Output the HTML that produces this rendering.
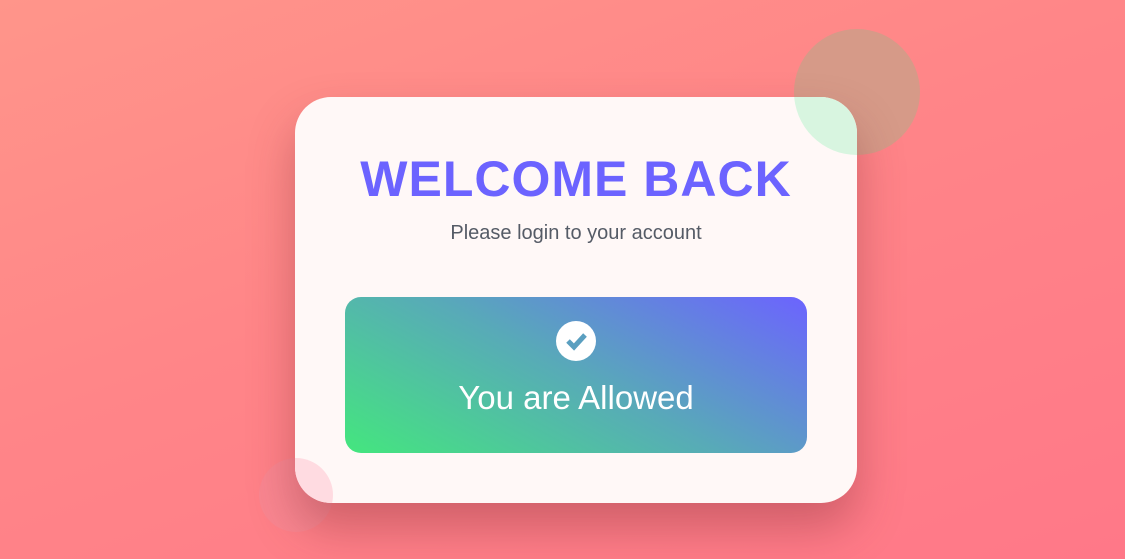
<!DOCTYPE html>
<html><head><style>
html,body{margin:0;width:1125px;height:559px;overflow:hidden}
body{background:linear-gradient(160deg,#ff958a 0%,#ff8588 45%,#ff7888 100%);font-family:"Liberation Sans",sans-serif;position:relative}
.card{position:absolute;left:295px;top:97px;width:562px;height:406px;border-radius:36px;background:#fff8f7;box-shadow:0 25px 45px rgba(120,40,50,.35);overflow:hidden}
.ctr{position:absolute;left:295px;width:562px;text-align:center;margin:0}
h1{top:150px;font-size:50px;font-weight:bold;color:#6c63ff;letter-spacing:1px}
p{top:222px;font-size:20px;color:#555b66}
.btn{position:absolute;left:345px;top:297px;width:462px;height:156px;border-radius:16px;background:linear-gradient(28deg,#44e67e 0%,#58aab8 50%,#6c63ff 100%)}
.c1{position:absolute;left:794px;top:29px;width:126px;height:126px;border-radius:50%;background:#d69a88}
.c2{position:absolute;left:259px;top:458px;width:74px;height:74px;border-radius:50%;background:#f98690}
</style></head><body>
<div class="c1"></div>
<div class="c2"></div>
<div class="card">
 <div style="position:absolute;left:499px;top:-68px;width:126px;height:126px;border-radius:50%;background:#d8f5e0"></div>
 <div style="position:absolute;left:-36px;top:361px;width:74px;height:74px;border-radius:50%;background:#ffdbe1"></div>
</div>
<h1 class="ctr">WELCOME BACK</h1>
<p class="ctr">Please login to your account</p>
<div class="btn"></div>
<svg style="position:absolute;left:556px;top:321px" width="40" height="40" viewBox="0 0 40 40"><circle cx="20" cy="20" r="20" fill="#fff"/><path d="M12 20l6 6 11-12" stroke="#5a9fc0" stroke-width="5" fill="none"/></svg>
<div class="ctr" style="top:379px;color:#fff;font-size:33px">You are Allowed</div>
</body></html>
